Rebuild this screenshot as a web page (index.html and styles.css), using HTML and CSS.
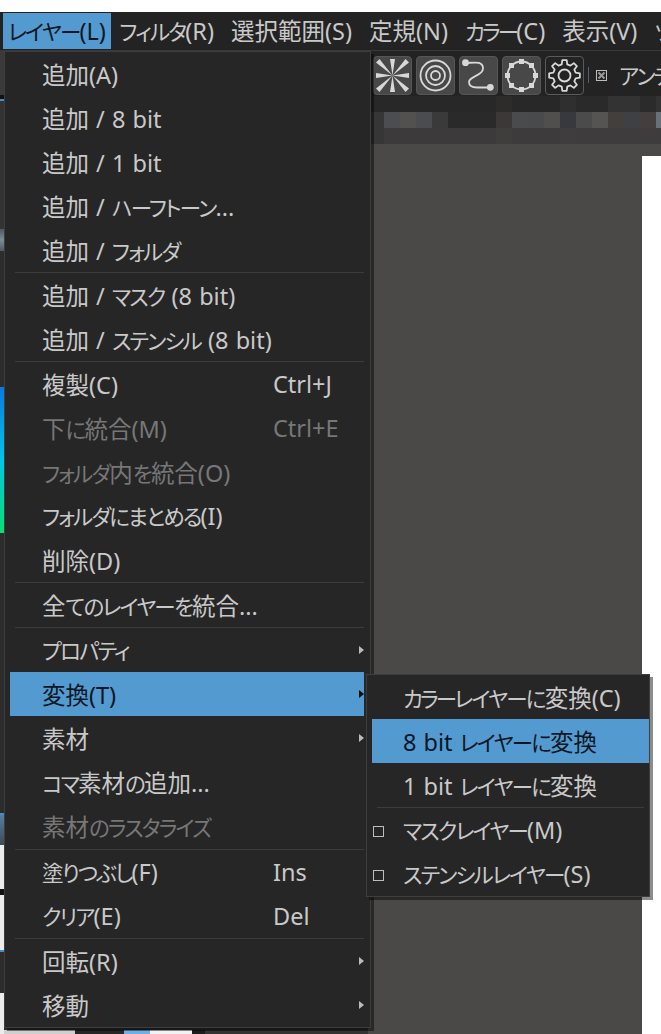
FILE: index.html
```html
<!DOCTYPE html>
<html lang="ja">
<head>
<meta charset="utf-8">
<title>レイヤー</title>
<link rel="stylesheet" href="styles.css">
</head>
<body>
<div class="app">
  <div class="topgap"></div>
  <nav class="menubar">
    <span class="mb-item active"><span class="k">レイヤー</span>(L)</span>
    <span class="mb-item"><span class="k">フィルタ</span>(R)</span>
    <span class="mb-item">選択範囲(S)</span>
    <span class="mb-item">定規(N)</span>
    <span class="mb-item"><span class="k k-tight">カラー</span>(C)</span>
    <span class="mb-item">表示(V)</span>
    <span class="mb-item"><span class="k">ツール</span>(T)</span>
  </nav>
  <div class="main">
    <div class="sidebar">
      <div class="seg s-mid h44"></div>
      <div class="seg s-black h4"></div>
      <div class="seg s-blue h2"></div>
      <div class="seg s-panel h128"></div>
      <div class="seg s-text h22"></div>
      <div class="seg s-dark h136"></div>
      <div class="seg s-spectrum h146"></div>
      <div class="seg s-dark h280"></div>
      <div class="seg s-blue h2"></div>
      <div class="seg s-steel h30"></div>
      <div class="seg s-white h44"></div>
      <div class="seg s-black h6"></div>
      <div class="seg s-white h55"></div>
      <div class="seg s-blue h2"></div>
      <div class="seg s-dark h41"></div>
      <div class="seg s-white h42"></div>
    </div>
    <div class="panel">
      <div class="panel-fill"></div>
      <div class="panel-foot">
        <span class="f f-a"></span>
        <span class="f f-b"></span>
        <span class="f f-c"></span>
        <span class="f f-d"></span>
        <span class="f f-e"></span>
        <span class="f f-f"></span>
      </div>
    </div>
    <div class="work">
      <div class="toolbar">
        <button class="tool">
          <svg viewBox="0 0 39 39" class="ico">
            <g class="fill">
              <polygon points="19.5,19.5 17,3 22,3"/>
              <polygon points="19.5,19.5 17,36 22,36"/>
              <polygon points="19.5,19.5 3,17 3,22"/>
              <polygon points="19.5,19.5 36,17 36,22"/>
              <polygon points="19.5,19.5 3,6.5 6.5,3"/>
              <polygon points="19.5,19.5 32.5,3 36,6.5"/>
              <polygon points="19.5,19.5 3,32.5 6.5,36"/>
              <polygon points="19.5,19.5 36,32.5 32.5,36"/>
            </g>
          </svg>
        </button>
        <button class="tool">
          <svg viewBox="0 0 39 39" class="ico">
            <g class="line">
              <circle cx="19.5" cy="19.5" r="15"/>
              <circle cx="19.5" cy="19.5" r="9.5"/>
              <circle cx="19.5" cy="19.5" r="4.5"/>
            </g>
          </svg>
        </button>
        <button class="tool">
          <svg viewBox="0 0 39 39" class="ico">
            <path class="line" d="M6 7C14 7 24 4 24 12.500C24 20 10 20 10 26C10 31 14 31.500 18 31.500H31"/>
            <circle class="fill" cx="6.500" cy="6.700" r="3.400"/>
            <circle class="fill" cx="31.300" cy="31.300" r="3.400"/>
          </svg>
        </button>
        <button class="tool">
          <svg viewBox="0 0 39 39" class="ico">
            <circle class="line" cx="19.5" cy="19.5" r="14"/>
            <g class="fill">
              <rect x="17" y="3" width="5" height="5"/>
              <rect x="17" y="31" width="5" height="5"/>
              <rect x="3" y="17" width="5" height="5"/>
              <rect x="31" y="17" width="5" height="5"/>
              <rect x="7" y="7" width="5" height="5"/>
              <rect x="27" y="7" width="5" height="5"/>
              <rect x="7" y="27" width="5" height="5"/>
              <rect x="27" y="27" width="5" height="5"/>
            </g>
          </svg>
        </button>
        <button class="tool tool-dark">
          <svg viewBox="-19.5 -19.5 39 39" class="ico">
            <g class="line">
              <polygon points="-2.78,-11.16 -2.16,-15.35 2.16,-15.35 2.78,-11.16 5.93,-9.86 9.33,-12.38 12.38,-9.33 9.86,-5.93 11.16,-2.78 15.35,-2.16 15.35,2.16 11.16,2.78 9.86,5.93 12.38,9.33 9.33,12.38 5.93,9.86 2.78,11.16 2.16,15.35 -2.16,15.35 -2.78,11.16 -5.93,9.86 -9.33,12.38 -12.38,9.33 -9.86,5.93 -11.16,2.78 -15.35,2.16 -15.35,-2.16 -11.16,-2.78 -9.86,-5.93 -12.38,-9.33 -9.33,-12.38 -5.93,-9.86"/>
              <circle cx="0" cy="0" r="6"/>
            </g>
          </svg>
        </button>
        <span class="tb-sep"></span>
        <span class="tb-check">
          <svg viewBox="0 0 9 9" class="tb-x"><path d="M1.500 1.500L7.500 7.500M7.500 1.500L1.500 7.500"/></svg>
        </span>
        <span class="tb-label"><span class="k">アンチエイリアス</span></span>
      </div>
      <div class="mosaic">
        <div class="mos m1"></div>
        <div class="mos m2"></div>
        <div class="mos m3"></div>
      </div>
      <div class="canvas-area">
        <div class="paper"></div>
      </div>
    </div>
  </div>

  <div class="menu main-menu">
    <div class="item"><span class="label">追加(A)</span></div>
    <div class="item"><span class="label">追加 / 8 bit</span></div>
    <div class="item"><span class="label">追加 / 1 bit</span></div>
    <div class="item"><span class="label">追加 / <span class="k">ハーフトーン</span>...</span></div>
    <div class="item"><span class="label">追加 / <span class="k">フォルダ</span></span></div>
    <div class="sep"></div>
    <div class="item"><span class="label">追加 / <span class="k">マスク</span> (8 bit)</span></div>
    <div class="item"><span class="label">追加 / <span class="k">ステンシル</span> (8 bit)</span></div>
    <div class="sep"></div>
    <div class="item"><span class="label">複製(C)</span><span class="key">Ctrl+J</span></div>
    <div class="item off"><span class="label">下<span class="k">に</span>統合(M)</span><span class="key">Ctrl+E</span></div>
    <div class="item off"><span class="label"><span class="k">フォルダ</span>内<span class="k">を</span>統合(O)</span></div>
    <div class="item"><span class="label"><span class="k">フォルダにまとめる</span>(I)</span></div>
    <div class="item"><span class="label">削除(D)</span></div>
    <div class="sep"></div>
    <div class="item"><span class="label">全<span class="k">ての</span><span class="k">レイヤーを</span>統合...</span></div>
    <div class="sep"></div>
    <div class="item more"><span class="label"><span class="k">プロパティ</span></span></div>
    <div class="item more hot"><span class="label">変換(T)</span></div>
    <div class="item more"><span class="label">素材</span></div>
    <div class="item"><span class="label"><span class="k">コマ</span>素材<span class="k">の</span>追加...</span></div>
    <div class="item off"><span class="label">素材<span class="k">のラスタライズ</span></span></div>
    <div class="sep sep-low"></div>
    <div class="item"><span class="label"><span class="k">塗りつぶし</span>(F)</span><span class="key">Ins</span></div>
    <div class="item"><span class="label"><span class="k">クリア</span>(E)</span><span class="key">Del</span></div>
    <div class="sep"></div>
    <div class="item more"><span class="label">回転(R)</span></div>
    <div class="item more"><span class="label">移動</span></div>
  </div>

  <div class="menu sub-menu">
    <div class="item"><span class="label"><span class="k k-tight">カラー</span><span class="k">レイヤーに</span>変換(C)</span></div>
    <div class="item hot"><span class="label">8 bit <span class="k">レイヤーに</span>変換</span></div>
    <div class="item"><span class="label">1 bit <span class="k">レイヤーに</span>変換</span></div>
    <div class="sep"></div>
    <div class="item"><i class="box"></i><span class="label"><span class="k">マスクレイヤー</span>(M)</span></div>
    <div class="item"><i class="box"></i><span class="label"><span class="k">ステンシルレイヤー</span>(S)</span></div>
  </div>
</div>
</body>
</html>
```
FILE: styles.css
```css
* { box-sizing: border-box; }
html, body { margin: 0; padding: 0; background: #fff; }
body {
  font-family: "Noto Sans", "Noto Sans CJK JP", sans-serif;
  font-size: 23.500px;
  font-feature-settings: "palt";
  color: #c9c9c9;
}
.k { font-size: 21.500px; letter-spacing: -1.800px; }
.k-tight { letter-spacing: -2.800px; }
.app {
  position: relative;
  width: 661px;
  height: 1034px;
  overflow: hidden;
  display: flex;
  flex-direction: column;
}
.topgap { height: 12px; background: #fff; flex: none; }

/* menu bar */
.menubar {
  flex: none;
  height: 39px;
  background: #232323;
  border-bottom: 1px solid #383838;
  display: flex;
  align-items: flex-start;
  padding: 1px 0 0 3px;
  white-space: nowrap;
}
.mb-item {
  height: 36px;
  line-height: 36px;
  padding: 0 8.500px;
  flex: none;
}
.mb-item.active { background: #539ad1; color: #0b1722; padding: 0 5px; }

/* body row */
.main { flex: 1; display: flex; min-height: 0; }
.sidebar { width: 4px; flex: none; display: flex; flex-direction: column; background: #2b2b2b; }
.seg { flex: none; }
.s-dark { background: #2c2c2c; }
.s-panel { background: #333; }
.s-blue { background: #3f8fd0; }
.s-mid { background: #3a3a3a; }
.s-text { background: linear-gradient(180deg, #4d5a66, #7f8b95, #4d5a66); }
.s-spectrum { background: linear-gradient(180deg, #0a78e0, #00c8e8 50%, #08e070); }
.s-steel { background: linear-gradient(180deg, #5a7d9c, #3c4a56); }
.s-white { background: #ececec; }
.s-black { background: #111; }
.h2 { height: 2px; } .h4 { height: 4px; } .h6 { height: 6px; } .h22 { height: 22px; } .h30 { height: 30px; }
.h41 { height: 41px; } .h42 { height: 42px; } .h44 { height: 44px; }
.h55 { height: 55px; } .h128 { height: 128px; } .h136 { height: 136px; } .h146 { height: 146px; }
.h280 { height: 280px; }

.panel { width: 364px; flex: none; display: flex; flex-direction: column; background: #2a2a2a; }
.panel-fill { flex: 1; }
.panel-foot { height: 4px; display: flex; flex: none; background: #2c2c2c; }
.f { display: block; height: 100%; }
.f-a { width: 71px; background: #cfcfcf; }
.f-b { width: 49px; background: #262626; }
.f-c { width: 26px; background: #6fb0e4; }
.f-d { width: 42px; background: #f2f2f2; }
.f-e { width: 13px; background: #1c1c1c; }
.f-f { flex: 1; background: #333; }

/* workspace */
.work { flex: 1; min-width: 0; display: flex; flex-direction: column; background: #4a4947; }
.toolbar {
  height: 45px;
  flex: none;
  background: #232323;
  display: flex;
  align-items: center;
  padding: 3px 0 0 5px;
  gap: 4px;
  white-space: nowrap;
  overflow: hidden;
}
.tool {
  width: 39px;
  height: 39px;
  flex: none;
  padding: 0;
  background: #484848;
  border: 1px solid #565656;
  border-radius: 4px;
  display: block;
}
.tool-dark { background: #232323; border-color: #5a5a5a; }
.ico { display: block; width: 39px; height: 39px; margin: -1px; overflow: visible; }
.fill { fill: #d8d8d8; stroke: none; }
.line { fill: none; stroke: #d8d8d8; stroke-width: 1.800; stroke-linejoin: round; }
.tb-sep { width: 1px; height: 16px; background: #55606c; flex: none; }
.tb-check {
  width: 11px;
  height: 11px;
  margin-left: 3px;
  border: 1px solid #bdbdbd;
  flex: none;
  display: flex;
}
.tb-x { width: 9px; height: 9px; display: block; }
.tb-x path { stroke: #9a9a9a; stroke-width: 2; fill: none; }
.tb-label { margin-left: 8px; flex: none; }

.mosaic { flex: none; height: 48px; display: flex; flex-direction: column; }
.mos { height: 16px; flex: none; }
.m1 {
  background: linear-gradient(90deg,
    #282828 0 128px, #2e2c2b 128px 144px, #282828 144px 192px, #2f2f2f 192px 208px,
    #2a2a2a 208px 240px, #333 240px 272px, #2b2b2b 272px 288px, #333 288px);
}
.m2 {
  background: linear-gradient(90deg,
    #363636 0 16px, #4b4d50 16px 32px, #525150 32px 48px, #4a4c50 48px 64px, #3a3a3a 64px 80px,
    #2b2a2a 80px 128px, #3b3837 128px 144px, #4a4b4c 144px 160px, #484a4b 160px 176px,
    #514f4b 176px 192px, #363a3e 192px 208px, #4b4b4b 208px 224px, #555452 224px 240px,
    #423f3c 240px 256px, #3f4044 256px 272px, #443f3c 272px 288px, #6a7078 288px);
}
.m3 {
  background: linear-gradient(90deg,
    #363636 0 16px, #3c3a3b 16px 128px, #403d3d 128px 144px, #3d3b3b 144px 192px,
    #403d3e 192px 208px, #3e3c3c 208px);
}
.canvas-area { flex: 1; padding: 12px 0 0 274px; min-height: 0; }
.paper { height: 100%; background: #fff; }

/* menus */
.menu {
  position: absolute;
  background: #262626;
  border: 1px solid #3e3e3e;
  box-shadow: 3px 3px 0 rgba(0, 0, 0, 0.45);
}
.main-menu { left: 4px; top: 51px; width: 367px; height: 977px; padding: 0 6px 0 5px; }
.sub-menu { left: 366px; top: 674px; width: 284px; height: 223px; padding: 0; }
.item {
  height: 44px;
  display: flex;
  align-items: center;
  position: relative;
  padding: 0 0 0 32px;
  white-space: nowrap;
}
.sub-menu .item { padding-left: 31px; margin-left: 5px; }
.label { flex: none; word-spacing: 1px; }
.key { position: absolute; left: 263px; }
.item.off { color: #777; }
.item.hot { background: #539ad1; color: #0b1722; }
.more::after {
  content: "";
  position: absolute;
  right: 0;
  top: 18px;
  border-left: 5px solid #bcbcbc;
  border-top: 4px solid transparent;
  border-bottom: 4px solid transparent;
}
.more.hot::after { border-left-color: #0b0b0b; }
.sep { height: 1px; background: #3c3c3c; margin: 0 0 0 5px; }
.sep-low { margin-top: 1px; }
.sub-menu .sep { margin: 0 5px 0 10px; }
.box {
  position: absolute;
  left: 1px;
  top: 18px;
  width: 11px;
  height: 11px;
  border: 1px solid #bdbdbd;
}
```
